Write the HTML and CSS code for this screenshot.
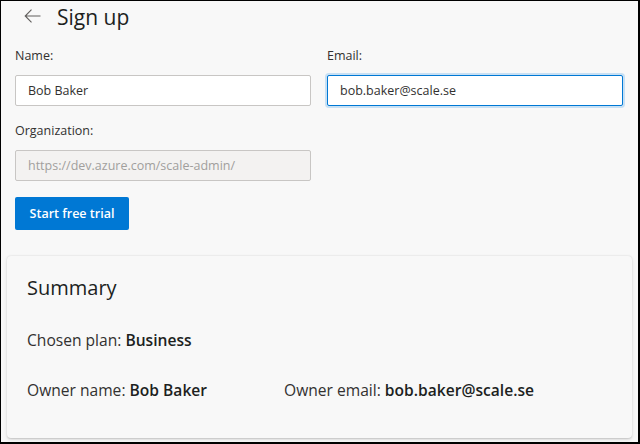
FILE: index.html
```html
<!DOCTYPE html>
<html lang="en">
<head>
<meta charset="utf-8">
<title>Sign up</title>
<link rel="stylesheet" href="styles.css">
</head>
<body>
<div class="frame">
  <header class="page-header">
    <button class="back" aria-label="Back">
      <svg width="17" height="14" viewBox="0 0 17 14" fill="none" stroke="#605e5c" stroke-width="1.1">
        <path d="M16.5 7H1.2M7.5 0.7L1.2 7L7.5 13.3"/>
      </svg>
    </button>
    <h1 class="title">Sign up</h1>
  </header>

  <form class="form">
    <div class="row">
      <div class="field">
        <label class="label">Name:</label>
        <input class="input" type="text" value="Bob Baker">
      </div>
      <div class="field">
        <label class="label">Email:</label>
        <input class="input focused" type="text" value="bob.baker@scale.se">
      </div>
    </div>
    <div class="row">
      <div class="field">
        <label class="label">Organization:</label>
        <input class="input disabled" type="text" value="https://dev.azure.com/scale-admin/" disabled>
      </div>
    </div>
    <div class="actions">
      <button type="button" class="primary">Start free trial</button>
    </div>
  </form>

  <section class="card">
    <h2 class="card-title">Summary</h2>
    <p class="line">Chosen plan: <b>Business</b></p>
    <div class="line pair">
      <span class="col">Owner name: <b>Bob Baker</b></span>
      <span class="col">Owner email: <b>bob.baker@scale.se</b></span>
    </div>
  </section>
</div>
</body>
</html>
```

FILE: styles.css
```css
* { box-sizing: border-box; }
html, body { margin: 0; padding: 0; }
body {
  width: 640px;
  height: 444px;
  overflow: hidden;
  background: #f8f8f8;
  font-family: "Open Sans", "Noto Sans", sans-serif;
  color: #323130;
}
.frame {
  width: 640px;
  height: 444px;
  border-top: 1px solid #000;
  border-left: 1px solid #000;
  border-right: 2px solid #000;
  border-bottom: 2px solid #000;
  overflow: hidden;
}
.page-header {
  display: flex;
  align-items: center;
  height: 32px;
  padding-left: 23px;
}
.back {
  border: 0;
  background: none;
  padding: 0;
  width: 17px;
  height: 14px;
  display: flex;
  margin-right: 16px;
  margin-top: -2px;
}
.title {
  margin: 0;
  font-size: 21px;
  font-weight: 400;
  line-height: 28px;
  color: #201f1e;
}
.form {
  padding: 14px 15px 0 14px;
}
.row {
  display: grid;
  grid-template-columns: 296px 296px;
  column-gap: 16px;
  margin-bottom: 16px;
}
.field {
  display: flex;
  flex-direction: column;
}
.label {
  font-size: 12.5px;
  line-height: 18px;
  height: 18px;
  color: #323130;
  margin-bottom: 10px;
}
.input {
  height: 31px;
  border: 1px solid #c8c6c4;
  border-radius: 2px;
  background: #fff;
  padding: 0 12px;
  font-family: inherit;
  font-size: 12.5px;
  color: #323130;
  outline: none;
}
.input.focused {
  border-color: #0078d4;
  box-shadow: 0 0 0 2px #c7e0f4;
}
.input.disabled {
  background: #f3f2f1;
  border-color: #c8c6c4;
  color: #a19f9d;
}
.actions {
  margin-top: 0;
}
.primary {
  height: 33px;
  width: 114px;
  border: 0;
  border-radius: 2px;
  background: #0078d4;
  color: #fff;
  font-family: inherit;
  font-size: 12.5px;
  font-weight: 600;
  padding: 0;
}
.card {
  margin: 26px 6px 0 6px;
  height: 182px;
  background: #f8f8f8;
  border-radius: 4px;
  box-shadow: 0 0.6px 1.8px rgba(0,0,0,0.16), 0 2px 5px rgba(0,0,0,0.08);
  padding: 18px 20px;
}
.card-title {
  margin: 0;
  font-size: 20px;
  font-weight: 400;
  line-height: 28px;
  color: #201f1e;
}
.line {
  margin: 0;
  font-size: 15.6px;
  line-height: 20px;
  color: #323130;
}
.line b { font-weight: 600; color: #201f1e; }
p.line { margin-top: 28px; }
.pair {
  display: flex;
  margin-top: 30px;
}
.pair .col:first-child { width: 257px; }
```
